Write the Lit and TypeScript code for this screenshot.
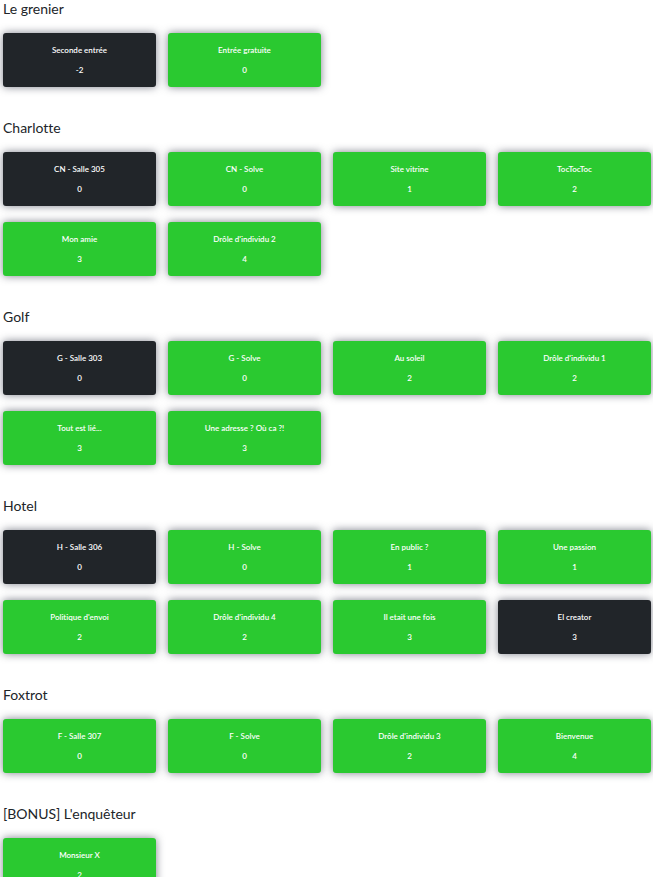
import { LitElement, html, css } from "lit";
import { customElement, property } from "lit/decorators.js";

interface Challenge {
  name: string;
  value: number;
  open?: boolean;
}

interface Category {
  name: string;
  challenges: Challenge[];
}

const categories: Category[] = [
  {
    name: "Le grenier",
    challenges: [
      { name: "Seconde entrée", value: -2, open: true },
      { name: "Entrée gratuite", value: 0 },
    ],
  },
  {
    name: "Charlotte",
    challenges: [
      { name: "CN - Salle 305", value: 0, open: true },
      { name: "CN - Solve", value: 0 },
      { name: "Site vitrine", value: 1 },
      { name: "TocTocToc", value: 2 },
      { name: "Mon amie", value: 3 },
      { name: "Drôle d'individu 2", value: 4 },
    ],
  },
  {
    name: "Golf",
    challenges: [
      { name: "G - Salle 303", value: 0, open: true },
      { name: "G - Solve", value: 0 },
      { name: "Au soleil", value: 2 },
      { name: "Drôle d'individu 1", value: 2 },
      { name: "Tout est lié...", value: 3 },
      { name: "Une adresse ? Où ca ?!", value: 3 },
    ],
  },
  {
    name: "Hotel",
    challenges: [
      { name: "H - Salle 306", value: 0, open: true },
      { name: "H - Solve", value: 0 },
      { name: "En public ?", value: 1 },
      { name: "Une passion", value: 1 },
      { name: "Politique d'envoi", value: 2 },
      { name: "Drôle d'individu 4", value: 2 },
      { name: "Il etait une fois", value: 3 },
      { name: "El creator", value: 3, open: true },
    ],
  },
  {
    name: "Foxtrot",
    challenges: [
      { name: "F - Salle 307", value: 0 },
      { name: "F - Solve", value: 0 },
      { name: "Drôle d'individu 3", value: 2 },
      { name: "Bienvenue", value: 4 },
    ],
  },
  {
    name: "[BONUS] L'enquêteur",
    challenges: [{ name: "Monsieur X", value: 2 }],
  },
];

@customElement("challenge-card")
class ChallengeCard extends LitElement {
  @property() name = "";
  @property({ type: Number }) value = 0;
  @property({ type: Boolean }) open = false;

  static styles = css`
    :host {
      display: block;
    }
    .card {
      display: flex;
      flex-direction: column;
      align-items: center;
      gap: 8px;
      width: 100%;
      padding: 11px 8px;
      border: 0;
      border-radius: 3px;
      background: #2ac930;
      box-shadow: 0 0 8px rgba(38, 44, 60, 0.6);
      color: #fff;
      font: 600 8px/12px Lato, "Open Sans", sans-serif;
      font-variant-ligatures: none;
      cursor: pointer;
    }
    .open {
      background: #212529;
    }
  `;

  render() {
    return html`<button type="button" class="card ${this.open ? "open" : ""}">
      <span>${this.name}</span>
      <span>${this.value}</span>
    </button>`;
  }
}

@customElement("app-root")
class AppRoot extends LitElement {
  static styles = css`
    :host {
      display: block;
      padding: 0 2px 16px 3px;
      background: #fff;
      color: #212529;
      font-family: Lato, "Open Sans", sans-serif;
      font-variant-ligatures: none;
    }
    .category {
      margin-bottom: 32px;
    }
    .title {
      margin: 0 0 16px;
      font-size: 14px;
      font-weight: 400;
      line-height: 17px;
    }
    .grid {
      display: grid;
      grid-template-columns: repeat(4, minmax(0, 1fr));
      gap: 16px 12px;
    }
  `;

  render() {
    return html`<main>
      ${categories.map(
        (category) => html`<section class="category">
          <h2 class="title">${category.name}</h2>
          <div class="grid">
            ${category.challenges.map(
              (c) => html`<challenge-card
                .name=${c.name}
                .value=${c.value}
                .open=${c.open ?? false}
              ></challenge-card>`,
            )}
          </div>
        </section>`,
      )}
    </main>`;
  }
}
